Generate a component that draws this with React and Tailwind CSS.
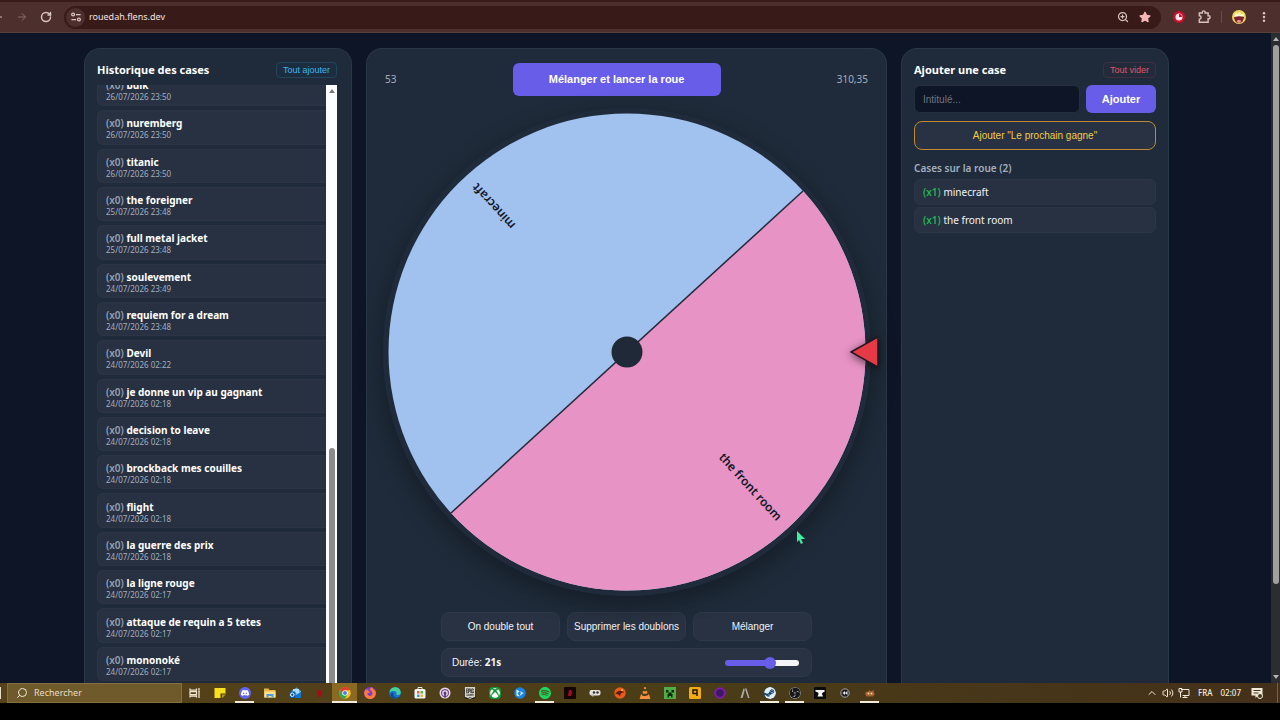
import React, { useState } from "react";
import { ArrowLeft, ArrowRight, RotateCw, ZoomIn, Search, ChevronUp, Volume2 } from "lucide-react";
import {
  SiDiscord,
  SiSpotify,
  SiEpicgames,
  SiSteam,
  SiObsstudio,
  SiVlcmediaplayer,
  SiFirefoxbrowser,
} from "react-icons/si";
import { FaXbox, FaStar } from "react-icons/fa";

const history = [
  { name: "bulk", date: "26/07/2026 23:50" },
  { name: "nuremberg", date: "26/07/2026 23:50" },
  { name: "titanic", date: "26/07/2026 23:50" },
  { name: "the foreigner", date: "25/07/2026 23:48" },
  { name: "full metal jacket", date: "25/07/2026 23:48" },
  { name: "soulevement", date: "24/07/2026 23:49" },
  { name: "requiem for a dream", date: "24/07/2026 23:48" },
  { name: "Devil", date: "24/07/2026 02:22" },
  { name: "je donne un vip au gagnant", date: "24/07/2026 02:18" },
  { name: "decision to leave", date: "24/07/2026 02:18" },
  { name: "brockback mes couilles", date: "24/07/2026 02:18" },
  { name: "flight", date: "24/07/2026 02:18" },
  { name: "la guerre des prix", date: "24/07/2026 02:18" },
  { name: "la ligne rouge", date: "24/07/2026 02:17" },
  { name: "attaque de requin a 5 tetes", date: "24/07/2026 02:17" },
  { name: "mononoké", date: "24/07/2026 02:17" },
];

const panel = "flex min-h-0 flex-col rounded-t-2xl border border-b-0 border-[#2a3747] bg-[#1f2b3a]";

function Svg({ children, size = "size-3", box = "0 0 24 24" }) {
  return (
    <svg viewBox={box} className={size} aria-hidden="true">
      {children}
    </svg>
  );
}

function BrowserBar() {
  return (
    <header className="flex h-[33px] shrink-0 items-center border-t-2 border-b border-t-[#3b1a1a] border-b-[#5a403d] bg-[#4d2f2d] pr-3.5 text-[#d9c3c1]">
      <button type="button" aria-label="Retour" className="-ml-2">
        <ArrowLeft className="size-3" />
      </button>
      <button type="button" aria-label="Avancer" className="ml-3 text-[#8b6c6a]">
        <ArrowRight className="size-3" />
      </button>
      <button type="button" aria-label="Actualiser" className="ml-3">
        <RotateCw className="size-3" strokeWidth={3} />
      </button>
      <div className="ml-3 flex h-[23px] flex-1 items-center rounded-full bg-[#381b19] pr-2.5 pl-0.5">
        <span className="flex size-[19px] items-center justify-center rounded-full bg-[#4d2f2d]">
          <Svg size="size-2.5">
            <g fill="none" stroke="currentColor" strokeWidth="3">
              <circle cx="5" cy="6" r="3.5" />
              <path d="M12 6h11M1 18h11" />
              <circle cx="19" cy="18" r="3.5" />
            </g>
          </Svg>
        </span>
        <input
          aria-label="Adresse"
          defaultValue="rouedah.flens.dev"
          className="ml-1 min-w-0 flex-1 bg-transparent text-[9px] text-[#f1e2e1] outline-none"
        />
        <ZoomIn className="size-3" strokeWidth={2.5} />
        <FaStar className="ml-2.5 size-3 text-[#f5b5b5]" />
      </div>
      <Svg size="ml-3 size-3">
        <circle cx="12" cy="12" r="12" fill="#c8102c" />
        <circle cx="12" cy="12" r="7" fill="#fbe9ea" />
        <path d="M12 6v6h6a6 6 0 0 0-6-6z" fill="#c8102c" />
      </Svg>
      <Svg size="ml-3 size-3.5">
        <path
          d="M4 5h5V4a2.500 2.500 0 0 1 5 0v1h5v5h1a2.500 2.500 0 0 1 0 5h-1v6H4v-5a3 3 0 0 0 0-6z"
          fill="none"
          stroke="currentColor"
          strokeWidth="2.5"
        />
      </Svg>
      <span className="mx-2.5 h-3 w-px bg-[#6b4a48]" />
      <Svg size="size-3.5">
        <circle cx="12" cy="12" r="12" fill="#ead75a" />
        <path d="M4 8l4-4 2 3 3-4 3 4 4-1 1 5H4z" fill="#fff3a0" />
        <circle cx="8" cy="10" r="2.500" fill="#fff" />
        <circle cx="16" cy="10" r="2.500" fill="#fff" />
        <path d="M3 13q9-4 18-1l-3 8q-6 5-12 0z" fill="#7d2230" />
        <path d="M8 19q4-4 8 0l-2 3h-4z" fill="#ef9aa0" />
      </Svg>
      <button type="button" aria-label="Menu" className="ml-4">
        <Svg size="h-2.5 w-1" box="0 0 8 24">
          <g fill="currentColor">
            <circle cx="4" cy="3" r="3" />
            <circle cx="4" cy="12" r="3" />
            <circle cx="4" cy="21" r="3" />
          </g>
        </Svg>
      </button>
    </header>
  );
}

function HistoryPanel() {
  return (
    <section className={panel + " px-3"}>
      <div className="mt-2.5 mb-1 flex h-[22px] shrink-0 items-center justify-between pr-0.5">
        <h2 className="text-[11px] font-bold text-white">Historique des cases</h2>
        <button
          type="button"
          className="h-4 rounded border border-[#214559] bg-[#1d2d40] px-1.5 font-['Liberation_Sans',sans-serif] text-[9px] leading-3 text-[#38b6f0]"
        >
          Tout ajouter
        </button>
      </div>
      <div className="flex min-h-0 flex-1 pr-0.5">
        <div className="flex min-w-0 flex-1 flex-col justify-end overflow-hidden pb-0.5">
          <ul className="grid h-[609px] shrink-0 auto-rows-fr gap-1">
            {history.map((item) => (
              <li
                key={item.name}
                className="flex flex-col justify-center rounded-l-md border border-r-0 border-[#2b3546] bg-[#283142] pt-1 pl-2"
              >
                <p className="text-[10px] leading-3 font-bold text-white">
                  <span className="font-semibold text-[#94a0b2]">(x0)</span> {item.name}
                </p>
                <time className="text-[8px] leading-3 text-[#a3afbf]">{item.date}</time>
              </li>
            ))}
          </ul>
        </div>
        <div className="flex w-[11px] shrink-0 flex-col items-center bg-[#fbfcfd]">
          <Svg size="mt-1 h-1 w-1.5" box="0 0 6 4">
            <path d="M0 4l3-4 3 4z" fill="#777" />
          </Svg>
          <span className="mt-[355px] w-1.5 flex-1 rounded-t-full bg-[#8b8b8b]" />
        </div>
      </div>
    </section>
  );
}

function Wheel() {
  return (
    <div className="relative mx-auto mt-3 size-[488px] shrink-0">
      <div className="size-full rounded-full shadow-[0_8px_24px_rgba(0,0,0,0.35)]">
        <svg viewBox="-244 -244 488 488" className="size-full" role="img" aria-label="Roue">
          <circle r="244" fill="#1f2b3a" />
          <circle r="238.500" fill="#a1c1ee" />
          <path d="M176 -161A238.500 238.500 0 0 1 -176 161Z" fill="#e793c5" />
          <path d="M176 -161L-176 161" stroke="#1f2937" strokeWidth="1.5" />
          <g
            fontFamily="'Noto Sans', sans-serif"
            fontSize="12"
            fontWeight="600"
            textAnchor="end"
            fill="#111827"
          >
            <text transform="rotate(47.600)" x="226" y="4">
              the front room
            </text>
            <text transform="rotate(227.600)" x="226" y="4">
              minecraft
            </text>
          </g>
          <circle r="15.500" fill="#1f2937" />
        </svg>
      </div>
      <svg
        viewBox="0 0 28 32"
        className="absolute top-1/2 -right-[7px] h-8 w-7 -translate-y-1/2 drop-shadow-[0_2px_4px_rgba(0,0,0,0.6)]"
        aria-hidden="true"
      >
        <path d="M1 16L28 1v30z" fill="#e63946" stroke="#1c1620" strokeWidth="1.5" />
      </svg>
    </div>
  );
}

function WheelPanel() {
  const [duration, setDuration] = useState(21);
  const filled = ((duration - 1) / 32) * 100;

  return (
    <section className={panel}>
      <div className="mt-3.5 flex h-[33px] shrink-0 items-center justify-between px-[18px] text-[10px] text-[#a3afbf]">
        <span>53</span>
        <button
          type="button"
          className="h-[33px] w-52 rounded-md bg-[#675de8] font-['Liberation_Sans',sans-serif] text-[11px] font-bold text-white"
        >
          Mélanger et lancer la roue
        </button>
        <span>310,35</span>
      </div>
      <Wheel />
      <div className="mx-auto mt-4 w-full max-w-[371px] font-['Liberation_Sans',sans-serif] text-[10px] text-[#f1f4f8]">
        <div className="flex gap-[7px]">
          {["On double tout", "Supprimer les doublons", "Mélanger"].map((label) => (
            <button
              key={label}
              type="button"
              className="h-[29px] flex-1 rounded-lg border border-[#2d3848] bg-[#283242] whitespace-nowrap"
            >
              {label}
            </button>
          ))}
        </div>
        <div className="mt-[7px] flex h-[29px] items-center justify-between rounded-lg border border-[#2d3848] bg-[#283242] pr-3 pl-2.5">
          <label htmlFor="duration">
            Durée: <b className="font-['Noto_Sans',sans-serif]">{duration}s</b>
          </label>
          <input
            id="duration"
            type="range"
            min="1"
            max="33"
            value={duration}
            onChange={(e) => setDuration(Number(e.target.value))}
            style={{ backgroundImage: `linear-gradient(to right, #675de8 ${filled}%, #f3f4f6 ${filled}%)` }}
            className="h-1.5 w-[74px] appearance-none rounded-full [&::-webkit-slider-thumb]:size-3 [&::-webkit-slider-thumb]:appearance-none [&::-webkit-slider-thumb]:rounded-full [&::-webkit-slider-thumb]:bg-[#675de8]"
          />
        </div>
      </div>
    </section>
  );
}

function AddPanel() {
  const [title, setTitle] = useState("");

  return (
    <section className={panel + " px-3"}>
      <div className="mt-2.5 mb-1 flex h-[22px] shrink-0 items-center justify-between">
        <h2 className="text-[11px] font-bold text-white">Ajouter une case</h2>
        <button
          type="button"
          className="h-4 rounded border border-[#402f42] bg-[#232b3b] px-1.5 font-['Liberation_Sans',sans-serif] text-[9px] leading-3 text-[#e0526c]"
        >
          Tout vider
        </button>
      </div>
      <form
        onSubmit={(e) => e.preventDefault()}
        className="flex shrink-0 gap-1.5 font-['Liberation_Sans',sans-serif]"
      >
        <input
          aria-label="Intitulé"
          value={title}
          onChange={(e) => setTitle(e.target.value)}
          placeholder="Intitulé..."
          className="h-7 min-w-0 flex-1 rounded-md border border-[#232f40] bg-[#0e1526] px-2 text-[10px] text-white placeholder-[#6d7480] outline-none"
        />
        <button type="submit" className="h-7 w-[70px] rounded-md bg-[#675de8] text-[11px] font-bold text-white">
          Ajouter
        </button>
      </form>
      <button
        type="button"
        className="mt-2 h-[29px] shrink-0 rounded-lg border border-[#c08a35] bg-[#283242] font-['Liberation_Sans',sans-serif] text-[10px] text-[#f2cb4c]"
      >
        Ajouter "Le prochain gagne"
      </button>
      <h3 className="mt-2.5 text-[10px] leading-4 font-semibold text-[#a3afbf]">Cases sur la roue (2)</h3>
      <ul className="mt-[3px] flex flex-col gap-0.5 text-[10px] leading-6 text-[#f1f4f8]">
        {["minecraft", "the front room"].map((name) => (
          <li key={name} className="rounded-md border border-[#2b3546] bg-[#283142] pl-2">
            <span className="font-semibold text-[#22b455]">(x1)</span> {name}
          </li>
        ))}
      </ul>
    </section>
  );
}

function PageScrollbar() {
  return (
    <div className="flex w-[9px] shrink-0 flex-col items-center bg-[#2c2d30]">
      <Svg size="mt-1 h-1 w-1.5" box="0 0 6 4">
        <path d="M0 4l3-4 3 4z" fill="#b5b5b5" />
      </Svg>
      <span className="mt-1 w-1.5 flex-1 rounded-full bg-[#a0a09e]" />
      <Svg size="mt-[91px] mb-1 h-1 w-1.5" box="0 0 6 4">
        <path d="M0 0l3 4 3-4z" fill="#b5b5b5" />
      </Svg>
    </div>
  );
}

const apps = [
  {
    name: "Vue des tâches",
    icon: (
      <Svg>
        <path d="M2 3v3h13V3M2 21v-3h13v3M2 9h13v6H2zM20 2v4M20 10v12M18 8h4" fill="none" stroke="#eee5cf" strokeWidth="2.5" />
      </Svg>
    ),
  },
  {
    name: "Pense-bête",
    icon: (
      <Svg>
        <path d="M1 2h22v13l-7 7H1z" fill="#f8e01c" />
        <path d="M13 22v-9h10v2l-7 7z" fill="#4e3a0a" />
        <path d="M16 22v-7h7z" fill="#bf9d0c" />
      </Svg>
    ),
  },
  {
    name: "Discord",
    open: true,
    icon: (
      <span className="flex size-3 items-center justify-center rounded-full bg-[#6266ee]">
        <SiDiscord className="size-2 text-white" />
      </span>
    ),
  },
  {
    name: "Explorateur",
    icon: (
      <Svg>
        <path d="M0 3h9l2 3h12v15H0z" fill="#e6b84a" />
        <path d="M1 9h22v12H1z" fill="#fbe18d" />
        <path d="M5 21v-7h14v7h-4v-3H9v3z" fill="#4f9bd8" />
      </Svg>
    ),
  },
  {
    name: "Outlook",
    icon: (
      <Svg>
        <path d="M5 8l10-7 9 7v14H5z" fill="#4db4f2" />
        <path d="M8 4h12v9H8z" fill="#a8ddff" />
        <path d="M5 22l19-12v12z" fill="#1673cc" />
        <rect y="9" width="13" height="13" rx="2" fill="#0c59ac" />
        <circle cx="6.500" cy="15.500" r="3.500" fill="none" stroke="#fff" strokeWidth="2" />
      </Svg>
    ),
  },
  {
    name: "Jeu",
    icon: (
      <Svg>
        <path d="M7 5l4 2 5-2v14l-5 1-4-2z" fill="#a50e14" />
      </Svg>
    ),
  },
  {
    name: "Chrome",
    open: true,
    active: true,
    icon: (
      <Svg>
        <circle cx="12" cy="12" r="11.500" fill="#fbc116" />
        <path d="M2 6a11.500 11.500 0 0 1 20 0L12 7l-4 8z" fill="#e33b2e" />
        <path d="M2 6a11.500 11.500 0 0 0 10 17.500l5-9-9 1z" fill="#2da94f" />
        <circle cx="12" cy="12" r="5.500" fill="#fff" />
        <circle cx="12" cy="12" r="4" fill="#3b82f0" />
      </Svg>
    ),
  },
  {
    name: "Firefox",
    icon: (
      <span className="flex size-3 items-center justify-center rounded-full bg-[#7a3bd0]">
        <SiFirefoxbrowser className="size-3 text-[#ff7a38]" />
      </span>
    ),
  },
  {
    name: "Edge",
    icon: (
      <Svg>
        <circle cx="12" cy="12" r="11.500" fill="#1676cf" />
        <path d="M1 11C2-3 23-3 23.500 11c0 6-8 6-9 3 3-6-7-8-13.500-3z" fill="#46cfa2" />
        <path d="M9 12c-2 6 3 11 11 8-5 6-16 3-17-4 0-3 3-5 6-4z" fill="#0c4a94" />
      </Svg>
    ),
  },
  {
    name: "Microsoft Store",
    icon: (
      <Svg>
        <path d="M8 5V1h8v4" fill="none" stroke="#dfe9ec" strokeWidth="2" />
        <rect x="1" y="4" width="22" height="19" rx="3" fill="#f1f5f5" />
        <path d="M6 8h5v5H6z" fill="#e8623a" />
        <path d="M13 8h5v5h-5z" fill="#62b146" />
        <path d="M6 15h5v5H6z" fill="#2b9bdc" />
        <path d="M13 15h5v5h-5z" fill="#efb52e" />
      </Svg>
    ),
  },
  {
    name: "Podcasts",
    icon: (
      <Svg>
        <circle cx="12" cy="12" r="11" fill="#e7dced" />
        <circle cx="12" cy="12" r="7" fill="none" stroke="#7c4a94" strokeWidth="2.5" />
        <circle cx="12" cy="12" r="3" fill="#5b3a78" />
        <path d="M10 14h4l-1 8h-2z" fill="#5b3a78" />
      </Svg>
    ),
  },
  {
    name: "Epic Games",
    icon: (
      <span className="flex size-3 items-center justify-center rounded-sm bg-[#1c1b18]">
        <SiEpicgames className="size-3 text-[#d8d4ca]" />
      </span>
    ),
  },
  {
    name: "Xbox",
    icon: (
      <span className="flex size-3 items-center justify-center rounded-sm bg-[#159437]">
        <FaXbox className="size-2.5 text-white" />
      </span>
    ),
  },
  {
    name: "Battle.net",
    icon: (
      <Svg>
        <circle cx="12" cy="12" r="11.500" fill="#1686e4" />
        <path d="M5 5l6 4-4 3 4 7-6-2zM11 8l8 4-8 6 3-6z" fill="#e5f6ff" />
      </Svg>
    ),
  },
  { name: "Spotify", open: true, icon: <SiSpotify className="size-3 text-[#1ed45f]" /> },
  {
    name: "Dota",
    icon: (
      <Svg>
        <rect width="24" height="24" rx="2" fill="#160507" />
        <path d="M8 18l2-12h4l2 5-2 7z" fill="#a01020" />
      </Svg>
    ),
  },
  {
    name: "Manette",
    icon: (
      <Svg>
        <rect x="1" y="6" width="22" height="11" rx="4" fill="#e6e4df" />
        <path d="M3 15h7v4H7z" fill="#b4b0a8" />
        <circle cx="10" cy="11" r="2.500" fill="#333" />
        <circle cx="17" cy="11" r="2.500" fill="#333" />
      </Svg>
    ),
  },
  {
    name: "Origine",
    icon: (
      <Svg>
        <circle cx="12" cy="12" r="11.500" fill="#ea5a1c" />
        <path d="M2 15c4-8 11-10 19-4-7-1-8 2-9 8-2-4-5-6-10-4z" fill="#60190a" />
        <circle cx="16" cy="6" r="2" fill="#ffb25a" />
      </Svg>
    ),
  },
  {
    name: "VLC",
    icon: <SiVlcmediaplayer className="size-3 text-[#f2923c]" />,
  },
  {
    name: "Minecraft",
    icon: (
      <Svg>
        <rect width="24" height="24" fill="#4fae48" />
        <path d="M4 6h5v5H4zM15 6h5v5h-5zM9 11h6v3h2v7h-3v-3h-4v3H7v-7h2z" fill="#10270f" />
      </Svg>
    ),
  },
  {
    name: "Rockstar",
    icon: (
      <Svg>
        <rect width="24" height="24" rx="3" fill="#f3ac12" />
        <path d="M8 14V6h8v12M8 13h7" fill="none" stroke="#211503" strokeWidth="3" />
      </Svg>
    ),
  },
  {
    name: "Tor",
    icon: (
      <Svg>
        <circle cx="12" cy="12" r="9.500" fill="#3e1666" stroke="#7c1cab" strokeWidth="4" />
      </Svg>
    ),
  },
  {
    name: "Ark",
    icon: (
      <Svg>
        <path d="M3 22L9 3h2v5L7 22M12 3h3l6 19h-3l-4-12" fill="#a9adb0" />
      </Svg>
    ),
  },
  { name: "Steam", open: true, icon: <SiSteam className="size-3 rounded-full bg-[#15486d] text-[#e2eef7]" /> },
  {
    name: "OBS",
    open: true,
    icon: <SiObsstudio className="size-3 rounded-full bg-[#17171a] text-[#c9c9c9]" />,
  },
  {
    name: "Forge",
    icon: (
      <Svg>
        <rect width="24" height="24" rx="2" fill="#0c0c0c" />
        <path d="M3 6h18v4c-4 0-5 2-5 4l2 5H7l2-5c0-3-2-4-6-5z" fill="#f5f5f5" />
      </Svg>
    ),
  },
  {
    name: "Lecteur",
    icon: (
      <Svg size="size-2.5">
        <circle cx="12" cy="12" r="10" fill="#1c1c22" stroke="#bfc2c8" strokeWidth="2" />
        <path d="M12 7v10l-6-5zM18 7v10l-6-5z" fill="#e6e6ea" />
      </Svg>
    ),
  },
  {
    name: "Gimp",
    open: true,
    icon: (
      <Svg>
        <path d="M4 9l4 1 3-4 3 3 5-3 1 6 2 2-4 5H5L2 14z" fill="#a9602b" />
        <circle cx="9" cy="13" r="2" fill="#f0d9b5" />
        <circle cx="15" cy="13" r="2" fill="#f0d9b5" />
      </Svg>
    ),
  },
];

function Taskbar() {
  return (
    <footer className="flex h-5 shrink-0 items-center bg-linear-to-r from-[#57421b] via-[#4b3e17] to-[#44301a] text-[#f1eadb]">
      <span className="mr-1.5 h-3 w-px bg-[#e7ddc7]" />
      <label className="flex h-full w-[175px] shrink-0 items-center border border-[#84703e] bg-[#6f5a2b] pl-2">
        <Search className="size-3 shrink-0 -scale-x-100" />
        <input
          aria-label="Rechercher"
          placeholder="Rechercher"
          className="ml-1.5 w-full min-w-0 bg-transparent text-[9px] placeholder-[#e6dcc5] outline-none"
        />
      </label>
      <nav className="flex h-full" aria-label="Applications">
        {apps.map((app) => (
          <button
            key={app.name}
            type="button"
            aria-label={app.name}
            className={
              "relative flex h-full w-[25px] items-center justify-center " + (app.active ? "bg-[#8a6a22]" : "")
            }
          >
            {app.icon}
            {app.open && (
              <span
                className={"absolute bottom-0 h-0.5 bg-[#f2ead8] " + (app.active ? "inset-x-0" : "inset-x-[3px]")}
              />
            )}
          </button>
        ))}
      </nav>
      <div className="ml-auto flex h-full items-center text-[8px] font-medium">
        <ChevronUp className="mr-1 size-3" />
        <Volume2 className="mr-1 size-3" />
        <Svg>
          <path d="M6 5h16v12H9M14 17v4M9 21h10M2 3h6v7H2zM5 10v11" fill="none" stroke="currentColor" strokeWidth="2" />
        </Svg>
        <span className="ml-2">FRA</span>
        <time className="ml-2">02:07</time>
        <Svg size="ml-2.5 size-3">
          <path d="M1 2h22v15h-9l-5 5v-5H1z" fill="currentColor" />
          <path d="M5 7h14M5 12h10" stroke="#4a3518" strokeWidth="2" />
          <circle cx="18" cy="18" r="5" fill="#4a3518" stroke="currentColor" strokeWidth="2" />
        </Svg>
        <span className="mr-0.5 ml-3.5 h-full w-px bg-[#7a6537]" />
      </div>
    </footer>
  );
}

export default function App() {
  return (
    <div className="relative flex h-screen flex-col overflow-hidden bg-black pb-[17px] font-['Noto_Sans',sans-serif]">
      <BrowserBar />
      <div className="flex min-h-0 flex-1 bg-[#0d1527]">
        <main className="grid min-w-0 flex-1 grid-cols-[268px_minmax(0,1fr)_268px] grid-rows-[minmax(0,1fr)] gap-3.5 overflow-hidden pt-[15px] pr-[102px] pl-[84px]">
          <HistoryPanel />
          <WheelPanel />
          <AddPanel />
        </main>
        <PageScrollbar />
      </div>
      <Taskbar />
      <svg viewBox="0 0 8 13" className="absolute top-[531px] left-[797px] h-[13px] w-2" aria-hidden="true">
        <path d="M0 0v11l2-2 2 4 2-1-2-4h4z" fill="#3ff0a0" />
      </svg>
    </div>
  );
}
